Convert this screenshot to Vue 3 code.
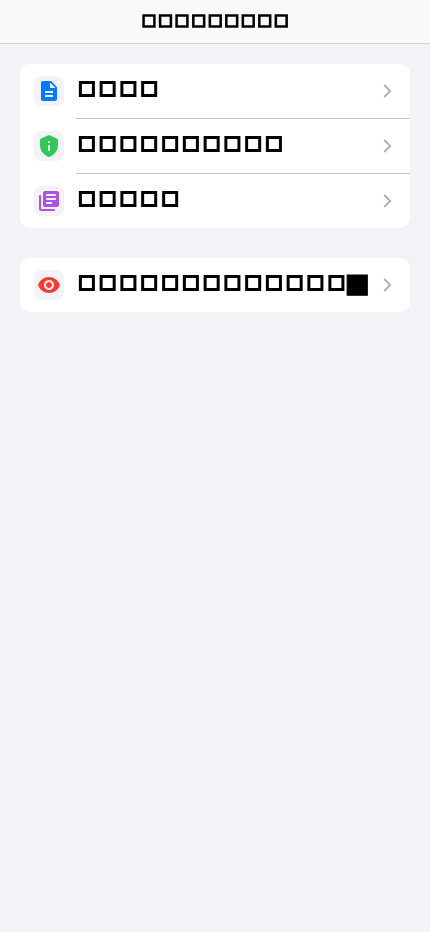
<script setup>
const groups = [
  [
    {
      label: '□□□□',
      color: 'blue',
      icon: 'M14.59 2.59c-.38-.38-.89-.59-1.42-.59H6c-1.1 0-2 .9-2 2v16c0 1.100.89 2 1.990 2H18c1.100 0 2-.9 2-2V8.830c0-.53-.21-1.040-.59-1.410l-4.820-4.830zM16 18H8v-2h8v2zm0-4H8v-2h8v2zm-2-5c-.55 0-1-.45-1-1V3.500L18.500 9H14z'
    },
    {
      label: '□□□□□□□□□□',
      color: 'green',
      icon: 'M4.190 4.470C3.470 4.790 3 5.510 3 6.300V11c0 5.550 3.840 10.740 9 12 5.160-1.260 9-6.450 9-12V6.300c0-.79-.47-1.510-1.190-1.830l-7-3.110c-.52-.23-1.110-.23-1.620 0l-7 3.110zM12 7c.55 0 1 .45 1 1s-.45 1-1 1-1-.45-1-1 .45-1 1-1zm0 4c.55 0 1 .45 1 1v4c0 .55-.45 1-1 1s-1-.45-1-1v-4c0-.55.45-1 1-1z'
    },
    {
      label: '□□□□□',
      color: 'purple',
      icon: 'M3 6c-.55 0-1 .45-1 1v13c0 1.100.9 2 2 2h13c.55 0 1-.45 1-1s-.45-1-1-1H5c-.55 0-1-.45-1-1V7c0-.55-.45-1-1-1zm17-4H8c-1.100 0-2 .9-2 2v12c0 1.100.9 2 2 2h12c1.100 0 2-.9 2-2V4c0-1.100-.9-2-2-2zm-2 9h-8c-.55 0-1-.45-1-1s.45-1 1-1h8c.55 0 1 .45 1 1s-.45 1-1 1zm-4 4h-4c-.55 0-1-.45-1-1s.45-1 1-1h4c.55 0 1 .45 1 1s-.45 1-1 1zm4-8h-8c-.55 0-1-.45-1-1s.45-1 1-1h8c.55 0 1 .45 1 1s-.45 1-1 1z'
    }
  ],
  [
    {
      label: '□□□□□□□□□□□□',
      last: '□',
      tail: '■',
      color: 'red',
      icon: 'M12 4C7 4 2.730 7.110 1 12c1.730 4.890 6 8 11 8s9.270-3.110 11-8c-1.730-4.890-6-8-11-8zm0 13c-2.760 0-5-2.240-5-5s2.240-5 5-5 5 2.240 5 5-2.240 5-5 5zm0-8c-1.660 0-3 1.340-3 3s1.340 3 3 3 3-1.340 3-3-1.340-3-3-3z'
    }
  ]
]
</script>

<template>
  <div class="page">
    <header class="nav">
      <h1 class="title">□□□□□□□□□</h1>
    </header>
    <main class="content">
      <section v-for="(group, g) in groups" :key="g" class="card">
        <div v-for="item in group" :key="item.color" class="row">
          <span class="tile">
            <svg class="icon" :class="item.color" viewBox="0 0 24 24"><path :d="item.icon" /></svg>
          </span>
          <div class="body">
            <span class="label">{{ item.label }}<template v-if="item.tail"><span class="last">{{ item.last }}</span><span class="tail">{{ item.tail }}</span></template></span>
            <svg class="chevron" viewBox="0 0 10 16"><path d="M1.200 2l6 6-6 6" /></svg>
          </div>
        </div>
      </section>
    </main>
  </div>
</template>

<style>
body {
  background: #f2f2f7;
}
</style>

<style scoped>
.page {
  min-height: 100vh;
  background: #f2f2f7;
  color: #000;
  font-family: "DejaVu Sans", sans-serif;
}
.nav {
  display: flex;
  justify-content: center;
  align-items: center;
  box-sizing: border-box;
  height: 44px;
  padding: 0 0 2.6px 2.4px;
  background: #f9f9f9;
  border-bottom: 1px solid #d2d2d2;
}
.title {
  margin: 0;
  font-size: 15px;
  font-weight: 400;
  line-height: 20px;
  letter-spacing: 2.37px;
  -webkit-text-stroke: 1.7px #000;
  will-change: transform;
}
.content {
  display: flex;
  flex-direction: column;
  gap: 30px;
  padding: 20px;
}
.card {
  overflow: hidden;
  border-radius: 10px;
  background: #fff;
}
.row {
  display: flex;
  align-items: stretch;
  height: 54px;
  padding-left: 14px;
}
.row:not(:last-child) {
  height: 55px;
}
.tile {
  display: flex;
  align-items: center;
  justify-content: center;
  flex: none;
  width: 30px;
  height: 30px;
  margin: 12px 12px 12px 0;
  border-radius: 8px;
  background: #f2f2f7;
}
.icon {
  width: 24px;
  height: 24px;
  fill: currentColor;
}
.blue { color: #007aff; }
.green { color: #34c759; }
.purple { color: #af52de; }
.red { color: #ff3b30; }
.body {
  display: flex;
  flex: 1;
  align-items: center;
  justify-content: space-between;
  min-width: 0;
  padding: 0 17px 0 1.6px;
}
.row:not(:last-child) .body {
  border-bottom: 1px solid #c6c6c8;
}
.label {
  padding-bottom: 6px;
  font-size: 18.2px;
  line-height: 24px;
  letter-spacing: 3.6px;
  white-space: nowrap;
  -webkit-text-stroke: 2px #000;
  will-change: transform;
}
.last {
  letter-spacing: 0;
}
.tail {
  font-size: 26.5px;
  line-height: 0;
  letter-spacing: 0;
  vertical-align: -4px;
  -webkit-text-stroke: 1px #000;
}
.chevron {
  flex: none;
  width: 10px;
  height: 16px;
  fill: none;
  stroke: #aeaeb2;
  stroke-width: 1.8;
}
</style>
